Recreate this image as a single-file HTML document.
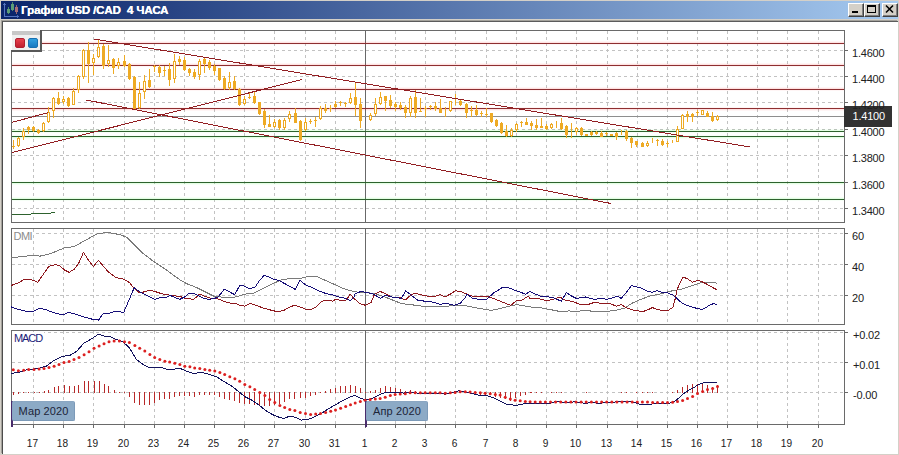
<!DOCTYPE html>
<html lang="ru"><head><meta charset="utf-8"><title>График USD/CAD</title>
<style>
html,body{margin:0;padding:0;background:#d4d0c8;}
body{width:899px;height:455px;position:relative;overflow:hidden;font-family:"Liberation Sans",sans-serif;}
#win{position:absolute;left:0;top:0;width:899px;height:455px;background:#d4d0c8;}
#title{position:absolute;left:1px;top:1px;width:897px;height:18px;background:linear-gradient(90deg,#0a246a 0%,#a6caf0 100%);}
#title .t{position:absolute;left:20px;top:1px;letter-spacing:-0.1px;color:#fff;font-weight:bold;font-size:11.5px;line-height:16px;white-space:pre;text-shadow:0.3px 0 0 #fff;}
.btn{position:absolute;top:2px;width:16px;height:14px;background:#d4d0c8;border:1px solid;border-color:#fff #404040 #404040 #fff;box-sizing:border-box;box-shadow:inset -1px -1px 0 #808080;}
#client{position:absolute;left:2px;top:21px;width:896px;height:433px;background:#fff;border-top:1px solid #5c5c5c;border-left:1px solid #4c4c4c;box-sizing:border-box;box-shadow:-1px -1px 0 #a4a29c;}
.lb{position:absolute;font-size:11px;line-height:12px;color:#202020;white-space:nowrap;letter-spacing:-0.2px;}
.tg{background:#fff;padding-left:2px;box-sizing:border-box;height:12px;}
.dx{width:31px;text-align:center;letter-spacing:0;transform:scaleX(.92);}
.pl{position:absolute;font-size:11px;line-height:12px;letter-spacing:-0.2px;}
.mon{position:absolute;height:20px;background:#8caac6;border:1px solid #8aa6c2;border-right-color:#7c9ab8;border-bottom-color:#7c9ab8;border-radius:2px;letter-spacing:0.12px;box-sizing:border-box;font-size:11px;line-height:18px;color:#1c2438;text-align:center;}
.mk{position:absolute;width:2px;background:#4a2c6c;}
</style></head><body>
<div id="win">
<div id="title">
<svg width="18" height="16" viewBox="0 0 18 16" style="position:absolute;left:2px;top:1px" shape-rendering="crispEdges">
<path d="M1.5 0.5v14H15.5" fill="none" stroke="#5474c0" stroke-width="1"/>
<rect x="0" y="2" width="1" height="1" fill="#4a68b4"/><rect x="2" y="2" width="1" height="1" fill="#4a68b4"/>
<rect x="14" y="13" width="1" height="1" fill="#4a68b4"/><rect x="14" y="15" width="1" height="1" fill="#4a68b4"/>
<rect x="5" y="5" width="1" height="7" fill="#4e8c68"/><rect x="4" y="7" width="3" height="4" fill="#5c9c78"/>
<rect x="9" y="0" width="1" height="9" fill="#4e8c68"/><rect x="8" y="2" width="3" height="6" fill="#5c9c78"/>
<rect x="13" y="3" width="1" height="9" fill="#9c6470"/><rect x="12" y="5" width="3" height="5" fill="#a87078"/>
</svg>
<div class="t">График USD /CAD  4 ЧАСА</div>
<div class="btn" style="left:847px"><svg width="13" height="11" style="position:absolute;left:0;top:0" shape-rendering="crispEdges"><rect x="3" y="7" width="6" height="2" fill="#000"/></svg></div>
<div class="btn" style="left:863px"><svg width="13" height="11" style="position:absolute;left:0;top:0" shape-rendering="crispEdges"><rect x="2.5" y="1.5" width="8" height="7" fill="none" stroke="#000"/><rect x="2" y="1" width="9" height="2" fill="#000"/></svg></div>
<div class="btn" style="left:881px"><svg width="13" height="11" style="position:absolute;left:0;top:0"><path d="M3 1.5l7 7M10 1.5l-7 7" stroke="#000" stroke-width="1.6" fill="none"/></svg></div>
</div>
<div id="client"></div>
<svg width="899" height="455" viewBox="0 0 899 455" style="position:absolute;left:0;top:0">
<g shape-rendering="crispEdges">
<line x1="33.5" y1="31" x2="33.5" y2="222" stroke="#c2c2c2" stroke-width="1" stroke-dasharray="3 3"/>
<line x1="63.5" y1="31" x2="63.5" y2="222" stroke="#c2c2c2" stroke-width="1" stroke-dasharray="3 3"/>
<line x1="93.5" y1="31" x2="93.5" y2="222" stroke="#c2c2c2" stroke-width="1" stroke-dasharray="3 3"/>
<line x1="124.5" y1="31" x2="124.5" y2="222" stroke="#c2c2c2" stroke-width="1" stroke-dasharray="3 3"/>
<line x1="154.5" y1="31" x2="154.5" y2="222" stroke="#c2c2c2" stroke-width="1" stroke-dasharray="3 3"/>
<line x1="184.5" y1="31" x2="184.5" y2="222" stroke="#c2c2c2" stroke-width="1" stroke-dasharray="3 3"/>
<line x1="214.5" y1="31" x2="214.5" y2="222" stroke="#c2c2c2" stroke-width="1" stroke-dasharray="3 3"/>
<line x1="244.5" y1="31" x2="244.5" y2="222" stroke="#c2c2c2" stroke-width="1" stroke-dasharray="3 3"/>
<line x1="274.5" y1="31" x2="274.5" y2="222" stroke="#c2c2c2" stroke-width="1" stroke-dasharray="3 3"/>
<line x1="305.5" y1="31" x2="305.5" y2="222" stroke="#c2c2c2" stroke-width="1" stroke-dasharray="3 3"/>
<line x1="335.5" y1="31" x2="335.5" y2="222" stroke="#c2c2c2" stroke-width="1" stroke-dasharray="3 3"/>
<line x1="365.5" y1="31" x2="365.5" y2="222" stroke="#c2c2c2" stroke-width="1" stroke-dasharray="3 3"/>
<line x1="395.5" y1="31" x2="395.5" y2="222" stroke="#c2c2c2" stroke-width="1" stroke-dasharray="3 3"/>
<line x1="425.5" y1="31" x2="425.5" y2="222" stroke="#c2c2c2" stroke-width="1" stroke-dasharray="3 3"/>
<line x1="455.5" y1="31" x2="455.5" y2="222" stroke="#c2c2c2" stroke-width="1" stroke-dasharray="3 3"/>
<line x1="486.5" y1="31" x2="486.5" y2="222" stroke="#c2c2c2" stroke-width="1" stroke-dasharray="3 3"/>
<line x1="516.5" y1="31" x2="516.5" y2="222" stroke="#c2c2c2" stroke-width="1" stroke-dasharray="3 3"/>
<line x1="546.5" y1="31" x2="546.5" y2="222" stroke="#c2c2c2" stroke-width="1" stroke-dasharray="3 3"/>
<line x1="576.5" y1="31" x2="576.5" y2="222" stroke="#c2c2c2" stroke-width="1" stroke-dasharray="3 3"/>
<line x1="607.5" y1="31" x2="607.5" y2="222" stroke="#c2c2c2" stroke-width="1" stroke-dasharray="3 3"/>
<line x1="637.5" y1="31" x2="637.5" y2="222" stroke="#c2c2c2" stroke-width="1" stroke-dasharray="3 3"/>
<line x1="667.5" y1="31" x2="667.5" y2="222" stroke="#c2c2c2" stroke-width="1" stroke-dasharray="3 3"/>
<line x1="697.5" y1="31" x2="697.5" y2="222" stroke="#c2c2c2" stroke-width="1" stroke-dasharray="3 3"/>
<line x1="727.5" y1="31" x2="727.5" y2="222" stroke="#c2c2c2" stroke-width="1" stroke-dasharray="3 3"/>
<line x1="757.5" y1="31" x2="757.5" y2="222" stroke="#c2c2c2" stroke-width="1" stroke-dasharray="3 3"/>
<line x1="787.5" y1="31" x2="787.5" y2="222" stroke="#c2c2c2" stroke-width="1" stroke-dasharray="3 3"/>
<line x1="818.5" y1="31" x2="818.5" y2="222" stroke="#c2c2c2" stroke-width="1" stroke-dasharray="3 3"/>
<line x1="12" y1="50.5" x2="844" y2="50.5" stroke="#c2c2c2" stroke-width="1" stroke-dasharray="3 3"/>
<line x1="12" y1="76.5" x2="844" y2="76.5" stroke="#c2c2c2" stroke-width="1" stroke-dasharray="3 3"/>
<line x1="12" y1="102.5" x2="844" y2="102.5" stroke="#c2c2c2" stroke-width="1" stroke-dasharray="3 3"/>
<line x1="12" y1="129.5" x2="844" y2="129.5" stroke="#c2c2c2" stroke-width="1" stroke-dasharray="3 3"/>
<line x1="12" y1="155.5" x2="844" y2="155.5" stroke="#c2c2c2" stroke-width="1" stroke-dasharray="3 3"/>
<line x1="12" y1="182.5" x2="844" y2="182.5" stroke="#c2c2c2" stroke-width="1" stroke-dasharray="3 3"/>
<line x1="12" y1="208.5" x2="844" y2="208.5" stroke="#c2c2c2" stroke-width="1" stroke-dasharray="3 3"/>
<line x1="33.5" y1="229" x2="33.5" y2="324" stroke="#c2c2c2" stroke-width="1" stroke-dasharray="3 3"/>
<line x1="63.5" y1="229" x2="63.5" y2="324" stroke="#c2c2c2" stroke-width="1" stroke-dasharray="3 3"/>
<line x1="93.5" y1="229" x2="93.5" y2="324" stroke="#c2c2c2" stroke-width="1" stroke-dasharray="3 3"/>
<line x1="124.5" y1="229" x2="124.5" y2="324" stroke="#c2c2c2" stroke-width="1" stroke-dasharray="3 3"/>
<line x1="154.5" y1="229" x2="154.5" y2="324" stroke="#c2c2c2" stroke-width="1" stroke-dasharray="3 3"/>
<line x1="184.5" y1="229" x2="184.5" y2="324" stroke="#c2c2c2" stroke-width="1" stroke-dasharray="3 3"/>
<line x1="214.5" y1="229" x2="214.5" y2="324" stroke="#c2c2c2" stroke-width="1" stroke-dasharray="3 3"/>
<line x1="244.5" y1="229" x2="244.5" y2="324" stroke="#c2c2c2" stroke-width="1" stroke-dasharray="3 3"/>
<line x1="274.5" y1="229" x2="274.5" y2="324" stroke="#c2c2c2" stroke-width="1" stroke-dasharray="3 3"/>
<line x1="305.5" y1="229" x2="305.5" y2="324" stroke="#c2c2c2" stroke-width="1" stroke-dasharray="3 3"/>
<line x1="335.5" y1="229" x2="335.5" y2="324" stroke="#c2c2c2" stroke-width="1" stroke-dasharray="3 3"/>
<line x1="365.5" y1="229" x2="365.5" y2="324" stroke="#c2c2c2" stroke-width="1" stroke-dasharray="3 3"/>
<line x1="395.5" y1="229" x2="395.5" y2="324" stroke="#c2c2c2" stroke-width="1" stroke-dasharray="3 3"/>
<line x1="425.5" y1="229" x2="425.5" y2="324" stroke="#c2c2c2" stroke-width="1" stroke-dasharray="3 3"/>
<line x1="455.5" y1="229" x2="455.5" y2="324" stroke="#c2c2c2" stroke-width="1" stroke-dasharray="3 3"/>
<line x1="486.5" y1="229" x2="486.5" y2="324" stroke="#c2c2c2" stroke-width="1" stroke-dasharray="3 3"/>
<line x1="516.5" y1="229" x2="516.5" y2="324" stroke="#c2c2c2" stroke-width="1" stroke-dasharray="3 3"/>
<line x1="546.5" y1="229" x2="546.5" y2="324" stroke="#c2c2c2" stroke-width="1" stroke-dasharray="3 3"/>
<line x1="576.5" y1="229" x2="576.5" y2="324" stroke="#c2c2c2" stroke-width="1" stroke-dasharray="3 3"/>
<line x1="607.5" y1="229" x2="607.5" y2="324" stroke="#c2c2c2" stroke-width="1" stroke-dasharray="3 3"/>
<line x1="637.5" y1="229" x2="637.5" y2="324" stroke="#c2c2c2" stroke-width="1" stroke-dasharray="3 3"/>
<line x1="667.5" y1="229" x2="667.5" y2="324" stroke="#c2c2c2" stroke-width="1" stroke-dasharray="3 3"/>
<line x1="697.5" y1="229" x2="697.5" y2="324" stroke="#c2c2c2" stroke-width="1" stroke-dasharray="3 3"/>
<line x1="727.5" y1="229" x2="727.5" y2="324" stroke="#c2c2c2" stroke-width="1" stroke-dasharray="3 3"/>
<line x1="757.5" y1="229" x2="757.5" y2="324" stroke="#c2c2c2" stroke-width="1" stroke-dasharray="3 3"/>
<line x1="787.5" y1="229" x2="787.5" y2="324" stroke="#c2c2c2" stroke-width="1" stroke-dasharray="3 3"/>
<line x1="818.5" y1="229" x2="818.5" y2="324" stroke="#c2c2c2" stroke-width="1" stroke-dasharray="3 3"/>
<line x1="12" y1="233.5" x2="844" y2="233.5" stroke="#c2c2c2" stroke-width="1" stroke-dasharray="3 3"/>
<line x1="12" y1="264.5" x2="844" y2="264.5" stroke="#c2c2c2" stroke-width="1" stroke-dasharray="3 3"/>
<line x1="12" y1="295.5" x2="844" y2="295.5" stroke="#c2c2c2" stroke-width="1" stroke-dasharray="3 3"/>
<line x1="33.5" y1="331" x2="33.5" y2="424" stroke="#c2c2c2" stroke-width="1" stroke-dasharray="3 3"/>
<line x1="63.5" y1="331" x2="63.5" y2="424" stroke="#c2c2c2" stroke-width="1" stroke-dasharray="3 3"/>
<line x1="93.5" y1="331" x2="93.5" y2="424" stroke="#c2c2c2" stroke-width="1" stroke-dasharray="3 3"/>
<line x1="124.5" y1="331" x2="124.5" y2="424" stroke="#c2c2c2" stroke-width="1" stroke-dasharray="3 3"/>
<line x1="154.5" y1="331" x2="154.5" y2="424" stroke="#c2c2c2" stroke-width="1" stroke-dasharray="3 3"/>
<line x1="184.5" y1="331" x2="184.5" y2="424" stroke="#c2c2c2" stroke-width="1" stroke-dasharray="3 3"/>
<line x1="214.5" y1="331" x2="214.5" y2="424" stroke="#c2c2c2" stroke-width="1" stroke-dasharray="3 3"/>
<line x1="244.5" y1="331" x2="244.5" y2="424" stroke="#c2c2c2" stroke-width="1" stroke-dasharray="3 3"/>
<line x1="274.5" y1="331" x2="274.5" y2="424" stroke="#c2c2c2" stroke-width="1" stroke-dasharray="3 3"/>
<line x1="305.5" y1="331" x2="305.5" y2="424" stroke="#c2c2c2" stroke-width="1" stroke-dasharray="3 3"/>
<line x1="335.5" y1="331" x2="335.5" y2="424" stroke="#c2c2c2" stroke-width="1" stroke-dasharray="3 3"/>
<line x1="365.5" y1="331" x2="365.5" y2="424" stroke="#c2c2c2" stroke-width="1" stroke-dasharray="3 3"/>
<line x1="395.5" y1="331" x2="395.5" y2="424" stroke="#c2c2c2" stroke-width="1" stroke-dasharray="3 3"/>
<line x1="425.5" y1="331" x2="425.5" y2="424" stroke="#c2c2c2" stroke-width="1" stroke-dasharray="3 3"/>
<line x1="455.5" y1="331" x2="455.5" y2="424" stroke="#c2c2c2" stroke-width="1" stroke-dasharray="3 3"/>
<line x1="486.5" y1="331" x2="486.5" y2="424" stroke="#c2c2c2" stroke-width="1" stroke-dasharray="3 3"/>
<line x1="516.5" y1="331" x2="516.5" y2="424" stroke="#c2c2c2" stroke-width="1" stroke-dasharray="3 3"/>
<line x1="546.5" y1="331" x2="546.5" y2="424" stroke="#c2c2c2" stroke-width="1" stroke-dasharray="3 3"/>
<line x1="576.5" y1="331" x2="576.5" y2="424" stroke="#c2c2c2" stroke-width="1" stroke-dasharray="3 3"/>
<line x1="607.5" y1="331" x2="607.5" y2="424" stroke="#c2c2c2" stroke-width="1" stroke-dasharray="3 3"/>
<line x1="637.5" y1="331" x2="637.5" y2="424" stroke="#c2c2c2" stroke-width="1" stroke-dasharray="3 3"/>
<line x1="667.5" y1="331" x2="667.5" y2="424" stroke="#c2c2c2" stroke-width="1" stroke-dasharray="3 3"/>
<line x1="697.5" y1="331" x2="697.5" y2="424" stroke="#c2c2c2" stroke-width="1" stroke-dasharray="3 3"/>
<line x1="727.5" y1="331" x2="727.5" y2="424" stroke="#c2c2c2" stroke-width="1" stroke-dasharray="3 3"/>
<line x1="757.5" y1="331" x2="757.5" y2="424" stroke="#c2c2c2" stroke-width="1" stroke-dasharray="3 3"/>
<line x1="787.5" y1="331" x2="787.5" y2="424" stroke="#c2c2c2" stroke-width="1" stroke-dasharray="3 3"/>
<line x1="818.5" y1="331" x2="818.5" y2="424" stroke="#c2c2c2" stroke-width="1" stroke-dasharray="3 3"/>
<line x1="12" y1="332.5" x2="844" y2="332.5" stroke="#c2c2c2" stroke-width="1" stroke-dasharray="3 3"/>
<line x1="12" y1="362.5" x2="844" y2="362.5" stroke="#c2c2c2" stroke-width="1" stroke-dasharray="3 3"/>
<line x1="12" y1="392.5" x2="844" y2="392.5" stroke="#c2c2c2" stroke-width="1" stroke-dasharray="3 3"/>
<rect x="11.5" y="30.5" width="833" height="192" fill="none" stroke="#6a6a6a" stroke-width="1"/>
<rect x="11.5" y="228.5" width="833" height="96" fill="none" stroke="#6a6a6a" stroke-width="1"/>
<rect x="11.5" y="330.5" width="833" height="94" fill="none" stroke="#6a6a6a" stroke-width="1"/>
<line x1="845" y1="50.5" x2="848" y2="50.5" stroke="#6a6a6a" stroke-width="1"/>
<line x1="845" y1="76.5" x2="848" y2="76.5" stroke="#6a6a6a" stroke-width="1"/>
<line x1="845" y1="102.5" x2="848" y2="102.5" stroke="#6a6a6a" stroke-width="1"/>
<line x1="845" y1="129.5" x2="848" y2="129.5" stroke="#6a6a6a" stroke-width="1"/>
<line x1="845" y1="155.5" x2="848" y2="155.5" stroke="#6a6a6a" stroke-width="1"/>
<line x1="845" y1="182.5" x2="848" y2="182.5" stroke="#6a6a6a" stroke-width="1"/>
<line x1="845" y1="208.5" x2="848" y2="208.5" stroke="#6a6a6a" stroke-width="1"/>
<line x1="845" y1="233.5" x2="848" y2="233.5" stroke="#6a6a6a" stroke-width="1"/>
<line x1="845" y1="264.5" x2="848" y2="264.5" stroke="#6a6a6a" stroke-width="1"/>
<line x1="845" y1="295.5" x2="848" y2="295.5" stroke="#6a6a6a" stroke-width="1"/>
<line x1="845" y1="332.5" x2="848" y2="332.5" stroke="#6a6a6a" stroke-width="1"/>
<line x1="845" y1="362.5" x2="848" y2="362.5" stroke="#6a6a6a" stroke-width="1"/>
<line x1="845" y1="392.5" x2="848" y2="392.5" stroke="#6a6a6a" stroke-width="1"/>
<line x1="33.5" y1="425" x2="33.5" y2="428" stroke="#6a6a6a" stroke-width="1"/>
<line x1="63.5" y1="425" x2="63.5" y2="428" stroke="#6a6a6a" stroke-width="1"/>
<line x1="93.5" y1="425" x2="93.5" y2="428" stroke="#6a6a6a" stroke-width="1"/>
<line x1="124.5" y1="425" x2="124.5" y2="428" stroke="#6a6a6a" stroke-width="1"/>
<line x1="154.5" y1="425" x2="154.5" y2="428" stroke="#6a6a6a" stroke-width="1"/>
<line x1="184.5" y1="425" x2="184.5" y2="428" stroke="#6a6a6a" stroke-width="1"/>
<line x1="214.5" y1="425" x2="214.5" y2="428" stroke="#6a6a6a" stroke-width="1"/>
<line x1="244.5" y1="425" x2="244.5" y2="428" stroke="#6a6a6a" stroke-width="1"/>
<line x1="274.5" y1="425" x2="274.5" y2="428" stroke="#6a6a6a" stroke-width="1"/>
<line x1="305.5" y1="425" x2="305.5" y2="428" stroke="#6a6a6a" stroke-width="1"/>
<line x1="335.5" y1="425" x2="335.5" y2="428" stroke="#6a6a6a" stroke-width="1"/>
<line x1="365.5" y1="425" x2="365.5" y2="428" stroke="#6a6a6a" stroke-width="1"/>
<line x1="395.5" y1="425" x2="395.5" y2="428" stroke="#6a6a6a" stroke-width="1"/>
<line x1="425.5" y1="425" x2="425.5" y2="428" stroke="#6a6a6a" stroke-width="1"/>
<line x1="455.5" y1="425" x2="455.5" y2="428" stroke="#6a6a6a" stroke-width="1"/>
<line x1="486.5" y1="425" x2="486.5" y2="428" stroke="#6a6a6a" stroke-width="1"/>
<line x1="516.5" y1="425" x2="516.5" y2="428" stroke="#6a6a6a" stroke-width="1"/>
<line x1="546.5" y1="425" x2="546.5" y2="428" stroke="#6a6a6a" stroke-width="1"/>
<line x1="576.5" y1="425" x2="576.5" y2="428" stroke="#6a6a6a" stroke-width="1"/>
<line x1="607.5" y1="425" x2="607.5" y2="428" stroke="#6a6a6a" stroke-width="1"/>
<line x1="637.5" y1="425" x2="637.5" y2="428" stroke="#6a6a6a" stroke-width="1"/>
<line x1="667.5" y1="425" x2="667.5" y2="428" stroke="#6a6a6a" stroke-width="1"/>
<line x1="697.5" y1="425" x2="697.5" y2="428" stroke="#6a6a6a" stroke-width="1"/>
<line x1="727.5" y1="425" x2="727.5" y2="428" stroke="#6a6a6a" stroke-width="1"/>
<line x1="757.5" y1="425" x2="757.5" y2="428" stroke="#6a6a6a" stroke-width="1"/>
<line x1="787.5" y1="425" x2="787.5" y2="428" stroke="#6a6a6a" stroke-width="1"/>
<line x1="818.5" y1="425" x2="818.5" y2="428" stroke="#6a6a6a" stroke-width="1"/>
<line x1="365.5" y1="31" x2="365.5" y2="222" stroke="#686868" stroke-width="1"/>
<line x1="365.5" y1="229" x2="365.5" y2="324" stroke="#686868" stroke-width="1"/>
<line x1="365.5" y1="331" x2="365.5" y2="424" stroke="#686868" stroke-width="1"/>
<line x1="12" y1="42.5" x2="844" y2="42.5" stroke="#ff0000" stroke-opacity="0.115"/>
<line x1="12" y1="41.5" x2="844" y2="41.5" stroke="#ff0000" stroke-opacity="0.04"/>
<line x1="12" y1="44.5" x2="844" y2="44.5" stroke="#ff0000" stroke-opacity="0.04"/>
<line x1="12" y1="43.5" x2="844" y2="43.5" stroke="#8e2f31" stroke-width="1"/>
<line x1="12" y1="64.5" x2="844" y2="64.5" stroke="#ff0000" stroke-opacity="0.115"/>
<line x1="12" y1="63.5" x2="844" y2="63.5" stroke="#ff0000" stroke-opacity="0.04"/>
<line x1="12" y1="66.5" x2="844" y2="66.5" stroke="#ff0000" stroke-opacity="0.04"/>
<line x1="12" y1="65.5" x2="844" y2="65.5" stroke="#8e2f31" stroke-width="1"/>
<line x1="12" y1="88.5" x2="844" y2="88.5" stroke="#ff0000" stroke-opacity="0.115"/>
<line x1="12" y1="87.5" x2="844" y2="87.5" stroke="#ff0000" stroke-opacity="0.04"/>
<line x1="12" y1="90.5" x2="844" y2="90.5" stroke="#ff0000" stroke-opacity="0.04"/>
<line x1="12" y1="89.5" x2="844" y2="89.5" stroke="#8e2f31" stroke-width="1"/>
<line x1="12" y1="109.5" x2="844" y2="109.5" stroke="#ff0000" stroke-opacity="0.115"/>
<line x1="12" y1="110.5" x2="844" y2="110.5" stroke="#ff0000" stroke-opacity="0.04"/>
<line x1="12" y1="107.5" x2="844" y2="107.5" stroke="#ff0000" stroke-opacity="0.04"/>
<line x1="12" y1="108.5" x2="844" y2="108.5" stroke="#8e2f31" stroke-width="1"/>
<line x1="12" y1="116.5" x2="844" y2="116.5" stroke="#8e8e8e" stroke-width="1"/>
<line x1="12" y1="130.5" x2="844" y2="130.5" stroke="#00ff00" stroke-opacity="0.11"/>
<line x1="12" y1="129.5" x2="844" y2="129.5" stroke="#00ff00" stroke-opacity="0.035"/>
<line x1="12" y1="132.5" x2="844" y2="132.5" stroke="#00ff00" stroke-opacity="0.035"/>
<line x1="12" y1="131.5" x2="844" y2="131.5" stroke="#2e622e" stroke-width="1"/>
<line x1="12" y1="137.5" x2="844" y2="137.5" stroke="#00ff00" stroke-opacity="0.11"/>
<line x1="12" y1="138.5" x2="844" y2="138.5" stroke="#00ff00" stroke-opacity="0.035"/>
<line x1="12" y1="135.5" x2="844" y2="135.5" stroke="#00ff00" stroke-opacity="0.035"/>
<line x1="12" y1="136.5" x2="844" y2="136.5" stroke="#2e622e" stroke-width="1"/>
<line x1="12" y1="183.5" x2="844" y2="183.5" stroke="#00ff00" stroke-opacity="0.11"/>
<line x1="12" y1="184.5" x2="844" y2="184.5" stroke="#00ff00" stroke-opacity="0.035"/>
<line x1="12" y1="181.5" x2="844" y2="181.5" stroke="#00ff00" stroke-opacity="0.035"/>
<line x1="12" y1="182.5" x2="844" y2="182.5" stroke="#2e622e" stroke-width="1"/>
<line x1="12" y1="198.5" x2="844" y2="198.5" stroke="#00ff00" stroke-opacity="0.11"/>
<line x1="12" y1="197.5" x2="844" y2="197.5" stroke="#00ff00" stroke-opacity="0.035"/>
<line x1="12" y1="200.5" x2="844" y2="200.5" stroke="#00ff00" stroke-opacity="0.035"/>
<line x1="12" y1="199.5" x2="844" y2="199.5" stroke="#2e622e" stroke-width="1"/>
<rect x="13" y="140" width="1" height="9" fill="#eeaa24"/>
<rect x="12" y="146" width="3" height="1" fill="#eeaa24"/>
<rect x="18" y="137" width="1" height="10" fill="#eeaa24"/>
<rect x="17" y="138" width="3" height="8" fill="#eeaa24"/>
<rect x="18" y="139" width="1" height="6" fill="#fff"/>
<rect x="23" y="128" width="1" height="12" fill="#eeaa24"/>
<rect x="22" y="131" width="3" height="6" fill="#eeaa24"/>
<rect x="23" y="132" width="1" height="4" fill="#fff"/>
<rect x="28" y="126" width="1" height="8" fill="#eeaa24"/>
<rect x="27" y="127" width="3" height="3" fill="#eeaa24"/>
<rect x="33" y="126" width="1" height="6" fill="#eeaa24"/>
<rect x="32" y="127" width="3" height="4" fill="#eeaa24"/>
<rect x="38" y="129" width="1" height="5" fill="#eeaa24"/>
<rect x="37" y="130" width="3" height="3" fill="#eeaa24"/>
<rect x="43" y="122" width="1" height="10" fill="#eeaa24"/>
<rect x="42" y="123" width="3" height="8" fill="#eeaa24"/>
<rect x="43" y="124" width="1" height="6" fill="#fff"/>
<rect x="48" y="107" width="1" height="16" fill="#eeaa24"/>
<rect x="47" y="112" width="3" height="10" fill="#eeaa24"/>
<rect x="48" y="113" width="1" height="8" fill="#fff"/>
<rect x="53" y="97" width="1" height="21" fill="#eeaa24"/>
<rect x="52" y="98" width="3" height="13" fill="#eeaa24"/>
<rect x="53" y="99" width="1" height="11" fill="#fff"/>
<rect x="58" y="92" width="1" height="13" fill="#eeaa24"/>
<rect x="57" y="98" width="3" height="6" fill="#eeaa24"/>
<rect x="63" y="96" width="1" height="8" fill="#eeaa24"/>
<rect x="62" y="99" width="3" height="3" fill="#eeaa24"/>
<rect x="63" y="100" width="1" height="1" fill="#fff"/>
<rect x="68" y="97" width="1" height="10" fill="#eeaa24"/>
<rect x="67" y="98" width="3" height="8" fill="#eeaa24"/>
<rect x="73" y="88" width="1" height="17" fill="#eeaa24"/>
<rect x="72" y="91" width="3" height="14" fill="#eeaa24"/>
<rect x="73" y="92" width="1" height="12" fill="#fff"/>
<rect x="78" y="75" width="1" height="18" fill="#eeaa24"/>
<rect x="77" y="76" width="3" height="14" fill="#eeaa24"/>
<rect x="78" y="77" width="1" height="12" fill="#fff"/>
<rect x="83" y="49" width="1" height="30" fill="#eeaa24"/>
<rect x="82" y="50" width="3" height="27" fill="#eeaa24"/>
<rect x="83" y="51" width="1" height="25" fill="#fff"/>
<rect x="88" y="42" width="1" height="41" fill="#eeaa24"/>
<rect x="87" y="50" width="3" height="14" fill="#eeaa24"/>
<rect x="93" y="54" width="1" height="21" fill="#eeaa24"/>
<rect x="92" y="58" width="3" height="5" fill="#eeaa24"/>
<rect x="93" y="59" width="1" height="3" fill="#fff"/>
<rect x="98" y="39" width="1" height="19" fill="#eeaa24"/>
<rect x="97" y="47" width="3" height="10" fill="#eeaa24"/>
<rect x="98" y="48" width="1" height="8" fill="#fff"/>
<rect x="103" y="44" width="1" height="25" fill="#eeaa24"/>
<rect x="102" y="46" width="3" height="20" fill="#eeaa24"/>
<rect x="108" y="45" width="1" height="22" fill="#eeaa24"/>
<rect x="107" y="60" width="3" height="4" fill="#eeaa24"/>
<rect x="108" y="61" width="1" height="2" fill="#fff"/>
<rect x="113" y="58" width="1" height="16" fill="#eeaa24"/>
<rect x="112" y="59" width="3" height="9" fill="#eeaa24"/>
<rect x="118" y="58" width="1" height="11" fill="#eeaa24"/>
<rect x="117" y="62" width="3" height="4" fill="#eeaa24"/>
<rect x="118" y="63" width="1" height="2" fill="#fff"/>
<rect x="124" y="55" width="1" height="12" fill="#eeaa24"/>
<rect x="123" y="61" width="3" height="5" fill="#eeaa24"/>
<rect x="129" y="63" width="1" height="17" fill="#eeaa24"/>
<rect x="128" y="64" width="3" height="15" fill="#eeaa24"/>
<rect x="134" y="76" width="1" height="33" fill="#eeaa24"/>
<rect x="133" y="77" width="3" height="32" fill="#eeaa24"/>
<rect x="139" y="82" width="1" height="27" fill="#eeaa24"/>
<rect x="138" y="93" width="3" height="15" fill="#eeaa24"/>
<rect x="139" y="94" width="1" height="13" fill="#fff"/>
<rect x="144" y="75" width="1" height="24" fill="#eeaa24"/>
<rect x="143" y="81" width="3" height="11" fill="#eeaa24"/>
<rect x="144" y="82" width="1" height="9" fill="#fff"/>
<rect x="149" y="69" width="1" height="19" fill="#eeaa24"/>
<rect x="148" y="80" width="3" height="7" fill="#eeaa24"/>
<rect x="154" y="65" width="1" height="7" fill="#eeaa24"/>
<rect x="153" y="66" width="3" height="1" fill="#eeaa24"/>
<rect x="159" y="65" width="1" height="12" fill="#eeaa24"/>
<rect x="158" y="67" width="3" height="6" fill="#eeaa24"/>
<rect x="164" y="66" width="1" height="10" fill="#eeaa24"/>
<rect x="163" y="70" width="3" height="1" fill="#eeaa24"/>
<rect x="169" y="63" width="1" height="23" fill="#eeaa24"/>
<rect x="168" y="69" width="3" height="11" fill="#eeaa24"/>
<rect x="174" y="54" width="1" height="29" fill="#eeaa24"/>
<rect x="173" y="61" width="3" height="18" fill="#eeaa24"/>
<rect x="174" y="62" width="1" height="16" fill="#fff"/>
<rect x="179" y="56" width="1" height="9" fill="#eeaa24"/>
<rect x="178" y="59" width="3" height="3" fill="#eeaa24"/>
<rect x="184" y="57" width="1" height="14" fill="#eeaa24"/>
<rect x="183" y="60" width="3" height="10" fill="#eeaa24"/>
<rect x="189" y="68" width="1" height="8" fill="#eeaa24"/>
<rect x="188" y="69" width="3" height="4" fill="#eeaa24"/>
<rect x="194" y="69" width="1" height="10" fill="#eeaa24"/>
<rect x="193" y="72" width="3" height="5" fill="#eeaa24"/>
<rect x="199" y="59" width="1" height="21" fill="#eeaa24"/>
<rect x="198" y="61" width="3" height="14" fill="#eeaa24"/>
<rect x="199" y="62" width="1" height="12" fill="#fff"/>
<rect x="204" y="57" width="1" height="16" fill="#eeaa24"/>
<rect x="203" y="59" width="3" height="5" fill="#eeaa24"/>
<rect x="209" y="60" width="1" height="10" fill="#eeaa24"/>
<rect x="208" y="62" width="3" height="6" fill="#eeaa24"/>
<rect x="214" y="64" width="1" height="11" fill="#eeaa24"/>
<rect x="213" y="66" width="3" height="5" fill="#eeaa24"/>
<rect x="219" y="68" width="1" height="13" fill="#eeaa24"/>
<rect x="218" y="68" width="3" height="12" fill="#eeaa24"/>
<rect x="224" y="76" width="1" height="14" fill="#eeaa24"/>
<rect x="223" y="78" width="3" height="11" fill="#eeaa24"/>
<rect x="229" y="72" width="1" height="18" fill="#eeaa24"/>
<rect x="228" y="82" width="3" height="6" fill="#eeaa24"/>
<rect x="229" y="83" width="1" height="4" fill="#fff"/>
<rect x="234" y="76" width="1" height="14" fill="#eeaa24"/>
<rect x="233" y="81" width="3" height="8" fill="#eeaa24"/>
<rect x="239" y="88" width="1" height="18" fill="#eeaa24"/>
<rect x="238" y="89" width="3" height="16" fill="#eeaa24"/>
<rect x="244" y="96" width="1" height="9" fill="#eeaa24"/>
<rect x="243" y="99" width="3" height="5" fill="#eeaa24"/>
<rect x="244" y="100" width="1" height="3" fill="#fff"/>
<rect x="249" y="93" width="1" height="6" fill="#eeaa24"/>
<rect x="248" y="97" width="3" height="1" fill="#eeaa24"/>
<rect x="254" y="92" width="1" height="12" fill="#eeaa24"/>
<rect x="253" y="96" width="3" height="7" fill="#eeaa24"/>
<rect x="259" y="102" width="1" height="13" fill="#eeaa24"/>
<rect x="258" y="102" width="3" height="12" fill="#eeaa24"/>
<rect x="264" y="109" width="1" height="19" fill="#eeaa24"/>
<rect x="263" y="111" width="3" height="14" fill="#eeaa24"/>
<rect x="269" y="115" width="1" height="12" fill="#eeaa24"/>
<rect x="268" y="124" width="3" height="3" fill="#eeaa24"/>
<rect x="274" y="119" width="1" height="9" fill="#eeaa24"/>
<rect x="273" y="122" width="3" height="5" fill="#eeaa24"/>
<rect x="274" y="123" width="1" height="3" fill="#fff"/>
<rect x="279" y="119" width="1" height="11" fill="#eeaa24"/>
<rect x="278" y="120" width="3" height="8" fill="#eeaa24"/>
<rect x="284" y="118" width="1" height="12" fill="#eeaa24"/>
<rect x="283" y="120" width="3" height="8" fill="#eeaa24"/>
<rect x="284" y="121" width="1" height="6" fill="#fff"/>
<rect x="289" y="111" width="1" height="11" fill="#eeaa24"/>
<rect x="288" y="114" width="3" height="5" fill="#eeaa24"/>
<rect x="289" y="115" width="1" height="3" fill="#fff"/>
<rect x="295" y="108" width="1" height="15" fill="#eeaa24"/>
<rect x="294" y="113" width="3" height="10" fill="#eeaa24"/>
<rect x="300" y="120" width="1" height="21" fill="#eeaa24"/>
<rect x="299" y="121" width="3" height="19" fill="#eeaa24"/>
<rect x="305" y="118" width="1" height="13" fill="#eeaa24"/>
<rect x="304" y="122" width="3" height="8" fill="#eeaa24"/>
<rect x="305" y="123" width="1" height="6" fill="#fff"/>
<rect x="310" y="119" width="1" height="5" fill="#eeaa24"/>
<rect x="309" y="121" width="3" height="1" fill="#eeaa24"/>
<rect x="315" y="117" width="1" height="10" fill="#eeaa24"/>
<rect x="314" y="120" width="3" height="1" fill="#eeaa24"/>
<rect x="320" y="106" width="1" height="14" fill="#eeaa24"/>
<rect x="319" y="108" width="3" height="11" fill="#eeaa24"/>
<rect x="320" y="109" width="1" height="9" fill="#fff"/>
<rect x="325" y="104" width="1" height="9" fill="#eeaa24"/>
<rect x="324" y="108" width="3" height="3" fill="#eeaa24"/>
<rect x="330" y="105" width="1" height="7" fill="#eeaa24"/>
<rect x="329" y="108" width="3" height="1" fill="#eeaa24"/>
<rect x="335" y="101" width="1" height="7" fill="#eeaa24"/>
<rect x="334" y="104" width="3" height="3" fill="#eeaa24"/>
<rect x="340" y="101" width="1" height="5" fill="#eeaa24"/>
<rect x="339" y="102" width="3" height="1" fill="#eeaa24"/>
<rect x="345" y="102" width="1" height="5" fill="#eeaa24"/>
<rect x="344" y="103" width="3" height="1" fill="#eeaa24"/>
<rect x="350" y="93" width="1" height="11" fill="#eeaa24"/>
<rect x="349" y="98" width="3" height="5" fill="#eeaa24"/>
<rect x="350" y="99" width="1" height="3" fill="#fff"/>
<rect x="355" y="82" width="1" height="34" fill="#eeaa24"/>
<rect x="354" y="97" width="3" height="8" fill="#eeaa24"/>
<rect x="360" y="98" width="1" height="30" fill="#eeaa24"/>
<rect x="359" y="104" width="3" height="17" fill="#eeaa24"/>
<rect x="370" y="113" width="1" height="8" fill="#eeaa24"/>
<rect x="369" y="115" width="3" height="5" fill="#eeaa24"/>
<rect x="370" y="116" width="1" height="3" fill="#fff"/>
<rect x="375" y="98" width="1" height="18" fill="#eeaa24"/>
<rect x="374" y="104" width="3" height="10" fill="#eeaa24"/>
<rect x="375" y="105" width="1" height="8" fill="#fff"/>
<rect x="380" y="92" width="1" height="13" fill="#eeaa24"/>
<rect x="379" y="97" width="3" height="7" fill="#eeaa24"/>
<rect x="380" y="98" width="1" height="5" fill="#fff"/>
<rect x="385" y="96" width="1" height="15" fill="#eeaa24"/>
<rect x="384" y="96" width="3" height="5" fill="#eeaa24"/>
<rect x="390" y="95" width="1" height="13" fill="#eeaa24"/>
<rect x="389" y="100" width="3" height="6" fill="#eeaa24"/>
<rect x="395" y="102" width="1" height="9" fill="#eeaa24"/>
<rect x="394" y="104" width="3" height="3" fill="#eeaa24"/>
<rect x="400" y="102" width="1" height="8" fill="#eeaa24"/>
<rect x="399" y="105" width="3" height="3" fill="#eeaa24"/>
<rect x="405" y="105" width="1" height="13" fill="#eeaa24"/>
<rect x="404" y="107" width="3" height="6" fill="#eeaa24"/>
<rect x="410" y="96" width="1" height="21" fill="#eeaa24"/>
<rect x="409" y="98" width="3" height="15" fill="#eeaa24"/>
<rect x="410" y="99" width="1" height="13" fill="#fff"/>
<rect x="415" y="90" width="1" height="28" fill="#eeaa24"/>
<rect x="414" y="97" width="3" height="16" fill="#eeaa24"/>
<rect x="420" y="98" width="1" height="14" fill="#eeaa24"/>
<rect x="419" y="111" width="3" height="1" fill="#eeaa24"/>
<rect x="425" y="106" width="1" height="11" fill="#eeaa24"/>
<rect x="424" y="108" width="3" height="1" fill="#eeaa24"/>
<rect x="430" y="105" width="1" height="5" fill="#eeaa24"/>
<rect x="429" y="106" width="3" height="1" fill="#eeaa24"/>
<rect x="435" y="102" width="1" height="9" fill="#eeaa24"/>
<rect x="434" y="106" width="3" height="3" fill="#eeaa24"/>
<rect x="440" y="99" width="1" height="14" fill="#eeaa24"/>
<rect x="439" y="108" width="3" height="5" fill="#eeaa24"/>
<rect x="445" y="107" width="1" height="10" fill="#eeaa24"/>
<rect x="450" y="101" width="1" height="11" fill="#eeaa24"/>
<rect x="449" y="101" width="3" height="10" fill="#eeaa24"/>
<rect x="450" y="102" width="1" height="8" fill="#fff"/>
<rect x="455" y="94" width="1" height="11" fill="#eeaa24"/>
<rect x="460" y="100" width="1" height="6" fill="#eeaa24"/>
<rect x="459" y="101" width="3" height="4" fill="#eeaa24"/>
<rect x="466" y="103" width="1" height="15" fill="#eeaa24"/>
<rect x="465" y="104" width="3" height="9" fill="#eeaa24"/>
<rect x="471" y="106" width="1" height="11" fill="#eeaa24"/>
<rect x="470" y="110" width="3" height="1" fill="#eeaa24"/>
<rect x="476" y="105" width="1" height="11" fill="#eeaa24"/>
<rect x="475" y="110" width="3" height="5" fill="#eeaa24"/>
<rect x="481" y="111" width="1" height="6" fill="#eeaa24"/>
<rect x="480" y="113" width="3" height="1" fill="#eeaa24"/>
<rect x="486" y="108" width="1" height="9" fill="#eeaa24"/>
<rect x="485" y="114" width="3" height="1" fill="#eeaa24"/>
<rect x="491" y="113" width="1" height="10" fill="#eeaa24"/>
<rect x="490" y="113" width="3" height="9" fill="#eeaa24"/>
<rect x="496" y="119" width="1" height="8" fill="#eeaa24"/>
<rect x="495" y="120" width="3" height="6" fill="#eeaa24"/>
<rect x="501" y="122" width="1" height="12" fill="#eeaa24"/>
<rect x="500" y="123" width="3" height="10" fill="#eeaa24"/>
<rect x="506" y="125" width="1" height="12" fill="#eeaa24"/>
<rect x="505" y="131" width="3" height="5" fill="#eeaa24"/>
<rect x="511" y="128" width="1" height="9" fill="#eeaa24"/>
<rect x="510" y="130" width="3" height="6" fill="#eeaa24"/>
<rect x="511" y="131" width="1" height="4" fill="#fff"/>
<rect x="516" y="123" width="1" height="9" fill="#eeaa24"/>
<rect x="515" y="124" width="3" height="6" fill="#eeaa24"/>
<rect x="516" y="125" width="1" height="4" fill="#fff"/>
<rect x="521" y="121" width="1" height="6" fill="#eeaa24"/>
<rect x="520" y="122" width="3" height="1" fill="#eeaa24"/>
<rect x="526" y="118" width="1" height="7" fill="#eeaa24"/>
<rect x="525" y="122" width="3" height="3" fill="#eeaa24"/>
<rect x="531" y="121" width="1" height="9" fill="#eeaa24"/>
<rect x="530" y="123" width="3" height="3" fill="#eeaa24"/>
<rect x="536" y="119" width="1" height="11" fill="#eeaa24"/>
<rect x="535" y="125" width="3" height="3" fill="#eeaa24"/>
<rect x="541" y="118" width="1" height="10" fill="#eeaa24"/>
<rect x="540" y="126" width="3" height="2" fill="#eeaa24"/>
<rect x="546" y="124" width="1" height="6" fill="#eeaa24"/>
<rect x="545" y="126" width="3" height="3" fill="#eeaa24"/>
<rect x="551" y="123" width="1" height="6" fill="#eeaa24"/>
<rect x="550" y="124" width="3" height="4" fill="#eeaa24"/>
<rect x="551" y="125" width="1" height="2" fill="#fff"/>
<rect x="556" y="121" width="1" height="7" fill="#eeaa24"/>
<rect x="561" y="118" width="1" height="12" fill="#eeaa24"/>
<rect x="560" y="123" width="3" height="6" fill="#eeaa24"/>
<rect x="566" y="125" width="1" height="13" fill="#eeaa24"/>
<rect x="565" y="126" width="3" height="9" fill="#eeaa24"/>
<rect x="571" y="123" width="1" height="15" fill="#eeaa24"/>
<rect x="576" y="127" width="1" height="8" fill="#eeaa24"/>
<rect x="575" y="128" width="3" height="4" fill="#eeaa24"/>
<rect x="576" y="129" width="1" height="2" fill="#fff"/>
<rect x="581" y="127" width="1" height="9" fill="#eeaa24"/>
<rect x="580" y="128" width="3" height="7" fill="#eeaa24"/>
<rect x="586" y="134" width="1" height="2" fill="#eeaa24"/>
<rect x="585" y="134" width="3" height="2" fill="#eeaa24"/>
<rect x="591" y="131" width="1" height="5" fill="#eeaa24"/>
<rect x="590" y="132" width="3" height="3" fill="#eeaa24"/>
<rect x="596" y="131" width="1" height="4" fill="#eeaa24"/>
<rect x="595" y="132" width="3" height="2" fill="#eeaa24"/>
<rect x="601" y="131" width="1" height="6" fill="#eeaa24"/>
<rect x="600" y="133" width="3" height="4" fill="#eeaa24"/>
<rect x="606" y="132" width="1" height="4" fill="#eeaa24"/>
<rect x="605" y="133" width="3" height="1" fill="#eeaa24"/>
<rect x="611" y="134" width="1" height="2" fill="#eeaa24"/>
<rect x="610" y="134" width="3" height="2" fill="#eeaa24"/>
<rect x="616" y="132" width="1" height="8" fill="#eeaa24"/>
<rect x="615" y="133" width="3" height="4" fill="#eeaa24"/>
<rect x="621" y="130" width="1" height="5" fill="#eeaa24"/>
<rect x="626" y="130" width="1" height="11" fill="#eeaa24"/>
<rect x="625" y="131" width="3" height="8" fill="#eeaa24"/>
<rect x="631" y="137" width="1" height="11" fill="#eeaa24"/>
<rect x="630" y="138" width="3" height="5" fill="#eeaa24"/>
<rect x="636" y="141" width="1" height="6" fill="#eeaa24"/>
<rect x="635" y="141" width="3" height="4" fill="#eeaa24"/>
<rect x="642" y="142" width="1" height="5" fill="#eeaa24"/>
<rect x="641" y="143" width="3" height="4" fill="#eeaa24"/>
<rect x="647" y="141" width="1" height="6" fill="#eeaa24"/>
<rect x="646" y="143" width="3" height="3" fill="#eeaa24"/>
<rect x="647" y="144" width="1" height="1" fill="#fff"/>
<rect x="652" y="138" width="1" height="5" fill="#eeaa24"/>
<rect x="657" y="139" width="1" height="7" fill="#eeaa24"/>
<rect x="656" y="140" width="3" height="1" fill="#eeaa24"/>
<rect x="662" y="139" width="1" height="7" fill="#eeaa24"/>
<rect x="661" y="141" width="3" height="4" fill="#eeaa24"/>
<rect x="667" y="141" width="1" height="6" fill="#eeaa24"/>
<rect x="666" y="143" width="3" height="1" fill="#eeaa24"/>
<rect x="672" y="140" width="1" height="3" fill="#eeaa24"/>
<rect x="677" y="126" width="1" height="16" fill="#eeaa24"/>
<rect x="676" y="129" width="3" height="13" fill="#eeaa24"/>
<rect x="677" y="130" width="1" height="11" fill="#fff"/>
<rect x="682" y="114" width="1" height="15" fill="#eeaa24"/>
<rect x="681" y="115" width="3" height="14" fill="#eeaa24"/>
<rect x="682" y="116" width="1" height="12" fill="#fff"/>
<rect x="687" y="111" width="1" height="11" fill="#eeaa24"/>
<rect x="686" y="114" width="3" height="3" fill="#eeaa24"/>
<rect x="692" y="113" width="1" height="9" fill="#eeaa24"/>
<rect x="691" y="114" width="3" height="3" fill="#eeaa24"/>
<rect x="697" y="110" width="1" height="6" fill="#eeaa24"/>
<rect x="696" y="112" width="3" height="1" fill="#eeaa24"/>
<rect x="702" y="110" width="1" height="5" fill="#eeaa24"/>
<rect x="701" y="110" width="3" height="5" fill="#eeaa24"/>
<rect x="702" y="111" width="1" height="3" fill="#fff"/>
<rect x="707" y="111" width="1" height="6" fill="#eeaa24"/>
<rect x="706" y="113" width="3" height="4" fill="#eeaa24"/>
<rect x="712" y="112" width="1" height="10" fill="#eeaa24"/>
<rect x="711" y="116" width="3" height="5" fill="#eeaa24"/>
<rect x="717" y="115" width="1" height="6" fill="#eeaa24"/>
<rect x="716" y="116" width="3" height="4" fill="#eeaa24"/>
<rect x="717" y="117" width="1" height="2" fill="#fff"/>
<line x1="93.6" y1="39.0" x2="750" y2="147" stroke="#921e22" stroke-width="1"/>
<line x1="86.3" y1="100.0" x2="611" y2="203.5" stroke="#921e22" stroke-width="1"/>
<line x1="12" y1="152.55" x2="302" y2="79.55" stroke="#921e22" stroke-width="1"/>
<line x1="12" y1="122.4" x2="48.5" y2="112.5" stroke="#921e22" stroke-width="1"/>
<line x1="12" y1="215" x2="55" y2="212.8" stroke="#2e622e" stroke-width="1"/>
</g>
<polyline points="11.2,257.3 22.3,256.8 33.8,255.0 39.6,256.2 47.7,254.5 55.8,251.5 63.8,248.1 74.2,246.5 85.8,240.0 97.3,233.8 107.7,232.4 120.4,234.7 127.3,237.7 134.2,244.6 143.5,253.8 152.7,260.8 166.5,270.0 175.8,276.9 180.0,279.9 186.9,283.8 196.2,287.3 205.4,291.9 214.6,296.5 223.8,297.2 235.4,297.0 244.6,294.2 253.8,293.1 263.1,288.5 272.3,283.8 281.5,279.9 290.8,278.5 300.0,278.5 309.2,276.2 316.2,276.2 325.4,280.4 334.6,284.5 341.5,287.8 350.8,290.8 360.0,292.6 365.4,292.4 375.8,293.8 385.0,297.0 394.2,300.7 401.2,303.5 410.4,304.6 419.6,305.8 428.8,306.9 438.1,306.2 447.3,306.2 456.5,305.3 465.8,305.8 475.0,307.6 484.2,309.2 491.2,310.4 500.4,308.5 509.6,306.2 516.5,304.6 523.5,305.8 530.0,306.9 539.2,307.6 548.5,309.2 560.0,311.5 569.2,310.9 576.2,311.5 585.4,310.4 594.6,311.5 606.2,311.5 615.4,310.4 624.6,308.1 631.5,303.5 640.8,299.3 650.0,296.1 659.2,294.2 668.5,291.6 682.0,289.0 690.0,286.3 702.0,282.3 714.0,282.1 716.7,283.4" fill="none" stroke="#7a7a7a" stroke-width="1" stroke-linejoin="round" shape-rendering="crispEdges"/>
<polyline points="11.2,285.5 17.7,283.2 24.6,279.2 31.5,279.7 37.8,282.2 43.1,274.6 48.8,266.5 54.6,264.7 59.2,265.4 64.5,270.0 69.2,272.3 74.2,269.3 78.8,263.1 83.5,252.2 88.1,259.6 93.4,266.5 98.5,260.1 103.1,266.1 108.8,272.3 115.8,277.6 123.8,279.2 129.6,282.7 134.2,288.5 140.0,293.1 149.2,290.3 155.0,291.5 161.9,293.8 171.2,295.4 180.0,296.5 185.8,298.4 193.8,299.3 199.6,294.2 205.4,296.5 211.2,298.4 216.9,298.4 223.8,301.2 229.6,303.0 234.2,303.0 240.0,305.3 244.6,306.2 250.4,303.5 256.2,305.3 261.9,307.6 267.7,309.2 273.5,310.9 279.2,311.5 283.8,310.4 288.5,307.6 294.2,305.3 300.0,306.9 305.8,309.2 311.5,309.2 316.2,306.9 321.9,301.2 327.7,300.0 332.3,301.2 335.8,299.3 341.5,300.7 346.2,300.0 350.3,294.2 354.2,298.8 355.0,299.3 359.6,303.5 365.4,305.3 371.2,302.3 374.6,294.2 380.4,291.5 386.2,294.2 391.9,297.0 400.0,297.7 405.3,300.0 410.4,295.4 414.5,293.1 420.8,294.7 428.8,296.5 435.8,296.1 440.4,294.7 445.0,297.0 450.8,293.8 455.4,290.8 461.2,291.5 465.8,293.8 472.7,296.1 479.6,296.5 486.5,296.1 493.5,298.4 502.7,302.3 510.8,305.3 516.5,300.7 522.3,300.0 528.1,296.1 530.0,298.4 539.2,298.8 546.2,300.7 553.1,299.3 560.0,297.0 564.6,300.0 571.5,301.2 580.8,304.6 587.7,304.6 594.6,302.3 601.5,303.5 609.6,303.5 616.5,306.2 621.2,304.6 626.9,308.1 633.8,310.4 643.1,311.5 647.7,309.9 652.3,307.6 656.9,309.2 662.7,310.9 668.5,310.4 670.0,309.0 672.7,307.7 674.7,301.0 677.3,289.0 682.7,277.3 686.7,278.3 692.7,282.3 697.3,280.3 702.0,281.7 706.0,283.7 710.0,286.1 716.7,289.7" fill="none" stroke="#8e181e" stroke-width="1" stroke-linejoin="round" shape-rendering="crispEdges"/>
<polyline points="11.2,306.9 17.7,309.2 26.9,311.5 32.7,311.5 39.6,308.1 46.5,309.9 53.5,312.7 62.7,315.0 68.5,312.2 74.2,313.8 83.5,316.9 93.8,319.6 98.5,320.1 103.1,313.8 107.7,313.8 114.6,311.5 123.8,312.2 128.5,301.2 134.2,287.8 140.0,291.9 148.1,296.1 155.0,299.3 159.6,297.7 165.4,297.7 170.0,295.4 178.1,298.8 180.0,299.3 184.6,297.0 189.2,293.1 193.8,293.5 199.6,296.5 204.2,298.4 208.8,299.3 214.6,298.4 218.1,297.0 224.3,289.2 229.6,291.9 234.7,294.7 240.0,285.0 244.6,286.2 249.2,288.5 255.0,287.3 259.6,280.4 264.2,275.3 268.8,276.9 273.5,279.2 279.2,280.4 285.0,283.8 290.8,286.8 295.4,289.6 300.0,280.4 305.8,285.0 311.5,287.3 318.5,290.8 325.4,293.3 332.3,294.9 339.2,297.0 346.2,298.4 350.3,300.7 354.2,296.5 355.0,293.8 360.8,291.5 366.5,292.4 373.5,294.2 380.4,298.4 385.0,295.4 391.9,297.0 401.2,298.4 405.8,290.8 411.5,295.4 418.5,300.7 426.5,301.2 434.6,302.3 440.4,304.6 445.0,303.0 454.2,305.3 460.0,303.5 464.6,298.4 466.9,294.2 472.7,298.4 479.6,299.3 486.5,299.3 493.5,293.1 502.7,287.3 508.5,287.8 516.5,290.8 525.8,294.2 530.0,291.5 534.6,293.8 540.4,296.1 546.2,296.5 553.1,297.7 561.2,301.2 566.5,292.4 570.4,295.4 576.2,298.4 585.4,297.0 594.6,299.3 601.5,298.4 607.3,299.3 613.1,297.7 617.7,296.1 621.2,298.4 625.8,293.1 631.5,285.5 636.2,286.8 640.8,287.8 646.5,290.8 652.3,292.4 656.9,290.8 662.7,292.4 668.5,293.1 670.0,294.1 672.7,294.6 675.3,297.0 679.3,301.0 683.3,303.7 690.0,306.6 696.7,308.3 702.0,309.4 706.0,307.4 710.0,305.0 714.0,303.4 716.7,304.6" fill="none" stroke="#160e78" stroke-width="1" stroke-linejoin="round" shape-rendering="crispEdges"/>
<g shape-rendering="crispEdges">
<rect x="13" y="392" width="1" height="3" fill="#b82828"/>
<rect x="18" y="392" width="1" height="2" fill="#b82828"/>
<rect x="23" y="392" width="1" height="1" fill="#b82828"/>
<rect x="28" y="392" width="1" height="1" fill="#b82828"/>
<rect x="34" y="392" width="1" height="1" fill="#b82828"/>
<rect x="39" y="392" width="1" height="1" fill="#b82828"/>
<rect x="44" y="391" width="1" height="2" fill="#b82828"/>
<rect x="48" y="390" width="1" height="3" fill="#b82828"/>
<rect x="54" y="387" width="1" height="6" fill="#b82828"/>
<rect x="58" y="386" width="1" height="7" fill="#b82828"/>
<rect x="64" y="385" width="1" height="8" fill="#b82828"/>
<rect x="69" y="386" width="1" height="7" fill="#b82828"/>
<rect x="74" y="386" width="1" height="7" fill="#b82828"/>
<rect x="78" y="385" width="1" height="8" fill="#b82828"/>
<rect x="84" y="381" width="1" height="12" fill="#b82828"/>
<rect x="88" y="381" width="1" height="12" fill="#b82828"/>
<rect x="94" y="381" width="1" height="12" fill="#b82828"/>
<rect x="99" y="381" width="1" height="12" fill="#b82828"/>
<rect x="104" y="384" width="1" height="9" fill="#b82828"/>
<rect x="108" y="386" width="1" height="7" fill="#b82828"/>
<rect x="114" y="390" width="1" height="3" fill="#b82828"/>
<rect x="119" y="392" width="1" height="1" fill="#b82828"/>
<rect x="124" y="392" width="1" height="1" fill="#b82828"/>
<rect x="129" y="392" width="1" height="5" fill="#b82828"/>
<rect x="134" y="392" width="1" height="11" fill="#b82828"/>
<rect x="139" y="392" width="1" height="13" fill="#b82828"/>
<rect x="144" y="392" width="1" height="13" fill="#b82828"/>
<rect x="149" y="392" width="1" height="13" fill="#b82828"/>
<rect x="154" y="392" width="1" height="11" fill="#b82828"/>
<rect x="159" y="392" width="1" height="8" fill="#b82828"/>
<rect x="164" y="392" width="1" height="7" fill="#b82828"/>
<rect x="169" y="392" width="1" height="7" fill="#b82828"/>
<rect x="174" y="392" width="1" height="5" fill="#b82828"/>
<rect x="179" y="392" width="1" height="4" fill="#b82828"/>
<rect x="184" y="392" width="1" height="4" fill="#b82828"/>
<rect x="189" y="392" width="1" height="4" fill="#b82828"/>
<rect x="194" y="392" width="1" height="5" fill="#b82828"/>
<rect x="199" y="392" width="1" height="3" fill="#b82828"/>
<rect x="204" y="392" width="1" height="3" fill="#b82828"/>
<rect x="209" y="392" width="1" height="3" fill="#b82828"/>
<rect x="214" y="392" width="1" height="3" fill="#b82828"/>
<rect x="219" y="392" width="1" height="5" fill="#b82828"/>
<rect x="224" y="392" width="1" height="7" fill="#b82828"/>
<rect x="229" y="392" width="1" height="8" fill="#b82828"/>
<rect x="234" y="392" width="1" height="9" fill="#b82828"/>
<rect x="239" y="392" width="1" height="11" fill="#b82828"/>
<rect x="244" y="392" width="1" height="12" fill="#b82828"/>
<rect x="249" y="392" width="1" height="12" fill="#b82828"/>
<rect x="254" y="392" width="1" height="13" fill="#b82828"/>
<rect x="259" y="392" width="1" height="13" fill="#b82828"/>
<rect x="264" y="392" width="1" height="14" fill="#b82828"/>
<rect x="269" y="392" width="1" height="14" fill="#b82828"/>
<rect x="274" y="392" width="1" height="13" fill="#b82828"/>
<rect x="279" y="392" width="1" height="12" fill="#b82828"/>
<rect x="284" y="392" width="1" height="10" fill="#b82828"/>
<rect x="289" y="392" width="1" height="7" fill="#b82828"/>
<rect x="294" y="392" width="1" height="7" fill="#b82828"/>
<rect x="300" y="392" width="1" height="6" fill="#b82828"/>
<rect x="305" y="392" width="1" height="6" fill="#b82828"/>
<rect x="310" y="392" width="1" height="4" fill="#b82828"/>
<rect x="315" y="392" width="1" height="3" fill="#b82828"/>
<rect x="320" y="392" width="1" height="1" fill="#b82828"/>
<rect x="325" y="391" width="1" height="2" fill="#b82828"/>
<rect x="330" y="389" width="1" height="4" fill="#b82828"/>
<rect x="335" y="388" width="1" height="5" fill="#b82828"/>
<rect x="340" y="386" width="1" height="7" fill="#b82828"/>
<rect x="345" y="386" width="1" height="7" fill="#b82828"/>
<rect x="350" y="385" width="1" height="8" fill="#b82828"/>
<rect x="355" y="386" width="1" height="7" fill="#b82828"/>
<rect x="360" y="388" width="1" height="5" fill="#b82828"/>
<rect x="365" y="392" width="1" height="1" fill="#b82828"/>
<rect x="370" y="391" width="1" height="2" fill="#b82828"/>
<rect x="375" y="390" width="1" height="3" fill="#b82828"/>
<rect x="380" y="388" width="1" height="5" fill="#b82828"/>
<rect x="385" y="386" width="1" height="7" fill="#b82828"/>
<rect x="390" y="387" width="1" height="6" fill="#b82828"/>
<rect x="395" y="388" width="1" height="5" fill="#b82828"/>
<rect x="400" y="389" width="1" height="4" fill="#b82828"/>
<rect x="405" y="391" width="1" height="2" fill="#b82828"/>
<rect x="410" y="390" width="1" height="3" fill="#b82828"/>
<rect x="415" y="391" width="1" height="2" fill="#b82828"/>
<rect x="420" y="392" width="1" height="1" fill="#b82828"/>
<rect x="425" y="392" width="1" height="1" fill="#b82828"/>
<rect x="430" y="392" width="1" height="1" fill="#b82828"/>
<rect x="435" y="392" width="1" height="1" fill="#b82828"/>
<rect x="440" y="392" width="1" height="1" fill="#b82828"/>
<rect x="445" y="392" width="1" height="1" fill="#b82828"/>
<rect x="450" y="392" width="1" height="1" fill="#b82828"/>
<rect x="455" y="391" width="1" height="2" fill="#b82828"/>
<rect x="460" y="391" width="1" height="2" fill="#b82828"/>
<rect x="465" y="392" width="1" height="1" fill="#b82828"/>
<rect x="470" y="392" width="1" height="2" fill="#b82828"/>
<rect x="475" y="392" width="1" height="3" fill="#b82828"/>
<rect x="480" y="392" width="1" height="3" fill="#b82828"/>
<rect x="485" y="392" width="1" height="3" fill="#b82828"/>
<rect x="490" y="392" width="1" height="3" fill="#b82828"/>
<rect x="495" y="392" width="1" height="5" fill="#b82828"/>
<rect x="500" y="392" width="1" height="6" fill="#b82828"/>
<rect x="505" y="392" width="1" height="7" fill="#b82828"/>
<rect x="510" y="392" width="1" height="9" fill="#b82828"/>
<rect x="515" y="392" width="1" height="6" fill="#b82828"/>
<rect x="520" y="392" width="1" height="4" fill="#b82828"/>
<rect x="525" y="392" width="1" height="3" fill="#b82828"/>
<rect x="530" y="392" width="1" height="1" fill="#b82828"/>
<rect x="677" y="390" width="1" height="3" fill="#b82828"/>
<rect x="682" y="387" width="1" height="6" fill="#b82828"/>
<rect x="687" y="385" width="1" height="8" fill="#b82828"/>
<rect x="692" y="384" width="1" height="9" fill="#b82828"/>
<rect x="697" y="384" width="1" height="9" fill="#b82828"/>
<rect x="702" y="383" width="1" height="10" fill="#b82828"/>
<rect x="707" y="385" width="1" height="8" fill="#b82828"/>
<rect x="712" y="387" width="1" height="6" fill="#b82828"/>
<rect x="717" y="385" width="1" height="8" fill="#b82828"/>
<rect x="531" y="392" width="1" height="1" fill="#b82828"/>
<rect x="536" y="392" width="1" height="1" fill="#b82828"/>
<rect x="541" y="392" width="1" height="1" fill="#b82828"/>
<rect x="551" y="392" width="1" height="1" fill="#b82828"/>
<rect x="556" y="392" width="1" height="1" fill="#b82828"/>
<rect x="561" y="392" width="1" height="1" fill="#b82828"/>
<rect x="586" y="392" width="1" height="1" fill="#b82828"/>
<rect x="621" y="392" width="1" height="1" fill="#b82828"/>
<rect x="626" y="392" width="1" height="1" fill="#b82828"/>
<rect x="636" y="392" width="1" height="1" fill="#b82828"/>
<rect x="642" y="392" width="1" height="1" fill="#b82828"/>
<rect x="647" y="392" width="1" height="1" fill="#b82828"/>
<rect x="652" y="392" width="1" height="1" fill="#b82828"/>
<rect x="672" y="392" width="1" height="1" fill="#b82828"/>
</g>
<polyline points="11.2,373.5 18.8,372.3 28.1,369.3 37.3,368.8 46.5,366.1 53.5,360.8 62.7,356.2 69.6,355.5 76.5,351.5 83.5,343.5 91.5,338.8 98.5,334.2 104.2,336.1 110.0,336.5 115.8,339.3 122.7,341.6 129.6,348.1 136.5,359.6 143.5,364.7 149.2,367.7 155.0,367.0 161.9,367.7 168.8,370.0 178.1,368.4 180.0,368.4 186.9,371.2 193.8,373.5 200.8,372.3 207.7,373.9 216.9,376.9 223.8,381.5 230.8,385.5 237.7,390.8 244.6,396.5 251.5,400.0 258.5,404.6 265.4,410.4 272.3,414.5 279.2,417.3 283.8,418.5 289.6,416.2 295.4,417.3 301.2,420.1 306.9,419.6 313.8,417.3 320.8,413.8 327.7,409.2 334.6,405.3 341.5,401.2 348.5,397.7 354.2,395.4 355.0,395.4 359.6,397.7 365.4,400.0 371.2,398.8 376.9,396.1 382.7,393.1 389.6,392.4 396.5,392.4 403.5,393.1 410.4,391.9 417.3,393.1 424.2,393.1 431.2,393.1 438.1,393.1 445.0,394.2 451.9,392.4 458.8,390.8 465.8,391.9 472.7,393.8 479.6,395.4 486.5,395.4 493.5,397.7 500.4,401.2 507.3,404.6 516.5,405.3 523.5,403.9 530.0,403.5 543.8,403.5 550.8,403.0 556.5,401.2 564.6,402.3 576.2,401.9 585.4,403.5 592.3,402.3 599.2,403.5 606.2,402.3 617.7,401.9 626.9,401.2 633.8,402.3 640.8,404.6 650.0,404.3 654.0,403.7 667.3,403.7 672.7,402.3 676.7,399.9 680.7,396.3 684.7,392.7 688.7,390.3 692.7,388.3 696.7,385.7 700.7,383.7 704.7,382.3 716.7,382.3" fill="none" stroke="#12125c" stroke-width="1" stroke-linejoin="round" shape-rendering="crispEdges"/>
<circle cx="13.3" cy="369.7" r="1.5" fill="#dc2020"/>
<circle cx="18.4" cy="370.7" r="1.5" fill="#dc2020"/>
<circle cx="23.7" cy="370.2" r="1.5" fill="#dc2020"/>
<circle cx="28.7" cy="369.5" r="1.5" fill="#dc2020"/>
<circle cx="34.0" cy="369.5" r="1.5" fill="#dc2020"/>
<circle cx="39.1" cy="369.0" r="1.5" fill="#dc2020"/>
<circle cx="44.0" cy="368.6" r="1.5" fill="#dc2020"/>
<circle cx="49.0" cy="367.4" r="1.5" fill="#dc2020"/>
<circle cx="54.1" cy="366.3" r="1.5" fill="#dc2020"/>
<circle cx="59.0" cy="364.4" r="1.5" fill="#dc2020"/>
<circle cx="64.0" cy="362.6" r="1.5" fill="#dc2020"/>
<circle cx="69.1" cy="361.4" r="1.5" fill="#dc2020"/>
<circle cx="74.0" cy="359.4" r="1.5" fill="#dc2020"/>
<circle cx="79.0" cy="357.5" r="1.5" fill="#dc2020"/>
<circle cx="84.1" cy="354.7" r="1.5" fill="#dc2020"/>
<circle cx="89.0" cy="351.7" r="1.5" fill="#dc2020"/>
<circle cx="94.0" cy="348.3" r="1.5" fill="#dc2020"/>
<circle cx="99.1" cy="346.0" r="1.5" fill="#dc2020"/>
<circle cx="104.0" cy="343.7" r="1.5" fill="#dc2020"/>
<circle cx="109.0" cy="341.8" r="1.5" fill="#dc2020"/>
<circle cx="114.1" cy="340.9" r="1.5" fill="#dc2020"/>
<circle cx="119.4" cy="340.9" r="1.5" fill="#dc2020"/>
<circle cx="124.5" cy="341.8" r="1.5" fill="#dc2020"/>
<circle cx="129.4" cy="342.5" r="1.5" fill="#dc2020"/>
<circle cx="134.9" cy="345.5" r="1.5" fill="#dc2020"/>
<circle cx="139.7" cy="348.3" r="1.5" fill="#dc2020"/>
<circle cx="144.8" cy="351.0" r="1.5" fill="#dc2020"/>
<circle cx="149.9" cy="354.5" r="1.5" fill="#dc2020"/>
<circle cx="154.7" cy="357.5" r="1.5" fill="#dc2020"/>
<circle cx="159.8" cy="359.4" r="1.5" fill="#dc2020"/>
<circle cx="164.9" cy="361.2" r="1.5" fill="#dc2020"/>
<circle cx="169.7" cy="362.1" r="1.5" fill="#dc2020"/>
<circle cx="174.8" cy="363.3" r="1.5" fill="#dc2020"/>
<circle cx="179.9" cy="364.4" r="1.5" fill="#dc2020"/>
<circle cx="184.8" cy="366.3" r="1.5" fill="#dc2020"/>
<circle cx="189.9" cy="366.7" r="1.5" fill="#dc2020"/>
<circle cx="194.7" cy="367.9" r="1.5" fill="#dc2020"/>
<circle cx="199.8" cy="368.6" r="1.5" fill="#dc2020"/>
<circle cx="204.9" cy="369.5" r="1.5" fill="#dc2020"/>
<circle cx="209.7" cy="370.2" r="1.5" fill="#dc2020"/>
<circle cx="214.8" cy="370.9" r="1.5" fill="#dc2020"/>
<circle cx="219.9" cy="372.5" r="1.5" fill="#dc2020"/>
<circle cx="224.7" cy="374.4" r="1.5" fill="#dc2020"/>
<circle cx="229.8" cy="376.7" r="1.5" fill="#dc2020"/>
<circle cx="234.9" cy="378.7" r="1.5" fill="#dc2020"/>
<circle cx="239.7" cy="381.3" r="1.5" fill="#dc2020"/>
<circle cx="244.8" cy="384.5" r="1.5" fill="#dc2020"/>
<circle cx="249.9" cy="386.8" r="1.5" fill="#dc2020"/>
<circle cx="254.7" cy="389.4" r="1.5" fill="#dc2020"/>
<circle cx="259.8" cy="392.6" r="1.5" fill="#dc2020"/>
<circle cx="264.9" cy="395.6" r="1.5" fill="#dc2020"/>
<circle cx="269.7" cy="399.5" r="1.5" fill="#dc2020"/>
<circle cx="274.8" cy="402.5" r="1.5" fill="#dc2020"/>
<circle cx="279.9" cy="405.5" r="1.5" fill="#dc2020"/>
<circle cx="284.7" cy="407.6" r="1.5" fill="#dc2020"/>
<circle cx="289.8" cy="409.4" r="1.5" fill="#dc2020"/>
<circle cx="294.9" cy="410.6" r="1.5" fill="#dc2020"/>
<circle cx="300.2" cy="412.4" r="1.5" fill="#dc2020"/>
<circle cx="305.5" cy="413.6" r="1.5" fill="#dc2020"/>
<circle cx="310.6" cy="414.5" r="1.5" fill="#dc2020"/>
<circle cx="315.7" cy="414.0" r="1.5" fill="#dc2020"/>
<circle cx="320.5" cy="413.4" r="1.5" fill="#dc2020"/>
<circle cx="325.6" cy="412.4" r="1.5" fill="#dc2020"/>
<circle cx="330.7" cy="411.3" r="1.5" fill="#dc2020"/>
<circle cx="335.5" cy="410.1" r="1.5" fill="#dc2020"/>
<circle cx="340.6" cy="408.3" r="1.5" fill="#dc2020"/>
<circle cx="345.7" cy="406.4" r="1.5" fill="#dc2020"/>
<circle cx="350.5" cy="404.8" r="1.5" fill="#dc2020"/>
<circle cx="355.2" cy="403.0" r="1.5" fill="#dc2020"/>
<circle cx="360.3" cy="401.4" r="1.5" fill="#dc2020"/>
<circle cx="365.1" cy="400.2" r="1.5" fill="#dc2020"/>
<circle cx="370.2" cy="399.5" r="1.5" fill="#dc2020"/>
<circle cx="375.3" cy="399.0" r="1.5" fill="#dc2020"/>
<circle cx="380.1" cy="398.6" r="1.5" fill="#dc2020"/>
<circle cx="385.2" cy="397.2" r="1.5" fill="#dc2020"/>
<circle cx="390.3" cy="395.6" r="1.5" fill="#dc2020"/>
<circle cx="395.1" cy="394.4" r="1.5" fill="#dc2020"/>
<circle cx="400.2" cy="394.0" r="1.5" fill="#dc2020"/>
<circle cx="405.3" cy="393.7" r="1.5" fill="#dc2020"/>
<circle cx="410.1" cy="392.8" r="1.5" fill="#dc2020"/>
<circle cx="415.2" cy="392.8" r="1.5" fill="#dc2020"/>
<circle cx="420.3" cy="392.8" r="1.5" fill="#dc2020"/>
<circle cx="425.1" cy="392.8" r="1.5" fill="#dc2020"/>
<circle cx="430.2" cy="392.8" r="1.5" fill="#dc2020"/>
<circle cx="435.3" cy="392.8" r="1.5" fill="#dc2020"/>
<circle cx="440.1" cy="392.8" r="1.5" fill="#dc2020"/>
<circle cx="445.2" cy="393.3" r="1.5" fill="#dc2020"/>
<circle cx="450.3" cy="392.8" r="1.5" fill="#dc2020"/>
<circle cx="455.1" cy="392.6" r="1.5" fill="#dc2020"/>
<circle cx="460.2" cy="391.7" r="1.5" fill="#dc2020"/>
<circle cx="465.3" cy="391.7" r="1.5" fill="#dc2020"/>
<circle cx="470.1" cy="392.1" r="1.5" fill="#dc2020"/>
<circle cx="475.2" cy="392.6" r="1.5" fill="#dc2020"/>
<circle cx="480.3" cy="392.8" r="1.5" fill="#dc2020"/>
<circle cx="485.1" cy="393.3" r="1.5" fill="#dc2020"/>
<circle cx="490.2" cy="393.7" r="1.5" fill="#dc2020"/>
<circle cx="495.3" cy="394.4" r="1.5" fill="#dc2020"/>
<circle cx="500.1" cy="394.9" r="1.5" fill="#dc2020"/>
<circle cx="505.2" cy="397.2" r="1.5" fill="#dc2020"/>
<circle cx="510.3" cy="399.0" r="1.5" fill="#dc2020"/>
<circle cx="515.1" cy="400.2" r="1.5" fill="#dc2020"/>
<circle cx="520.2" cy="400.7" r="1.5" fill="#dc2020"/>
<circle cx="525.3" cy="401.4" r="1.5" fill="#dc2020"/>
<circle cx="530.1" cy="401.8" r="1.5" fill="#dc2020"/>
<circle cx="535.2" cy="402.1" r="1.5" fill="#dc2020"/>
<circle cx="540.3" cy="402.1" r="1.5" fill="#dc2020"/>
<circle cx="545.4" cy="402.1" r="1.5" fill="#dc2020"/>
<circle cx="550.5" cy="402.1" r="1.5" fill="#dc2020"/>
<circle cx="555.6" cy="402.1" r="1.5" fill="#dc2020"/>
<circle cx="560.7" cy="402.1" r="1.5" fill="#dc2020"/>
<circle cx="565.8" cy="402.1" r="1.5" fill="#dc2020"/>
<circle cx="570.9" cy="402.1" r="1.5" fill="#dc2020"/>
<circle cx="576.0" cy="402.1" r="1.5" fill="#dc2020"/>
<circle cx="581.1" cy="402.1" r="1.5" fill="#dc2020"/>
<circle cx="586.2" cy="402.1" r="1.5" fill="#dc2020"/>
<circle cx="591.4" cy="402.1" r="1.5" fill="#dc2020"/>
<circle cx="596.5" cy="402.1" r="1.5" fill="#dc2020"/>
<circle cx="601.6" cy="402.1" r="1.5" fill="#dc2020"/>
<circle cx="606.7" cy="402.1" r="1.5" fill="#dc2020"/>
<circle cx="611.8" cy="402.1" r="1.5" fill="#dc2020"/>
<circle cx="616.9" cy="402.1" r="1.5" fill="#dc2020"/>
<circle cx="622.0" cy="402.1" r="1.5" fill="#dc2020"/>
<circle cx="627.1" cy="402.1" r="1.5" fill="#dc2020"/>
<circle cx="632.2" cy="402.1" r="1.5" fill="#dc2020"/>
<circle cx="637.3" cy="402.1" r="1.5" fill="#dc2020"/>
<circle cx="642.4" cy="402.1" r="1.5" fill="#dc2020"/>
<circle cx="647.5" cy="402.1" r="1.5" fill="#dc2020"/>
<circle cx="652.6" cy="402.5" r="1.5" fill="#dc2020"/>
<circle cx="657.5" cy="402.5" r="1.5" fill="#dc2020"/>
<circle cx="662.6" cy="402.5" r="1.5" fill="#dc2020"/>
<circle cx="667.5" cy="402.5" r="1.5" fill="#dc2020"/>
<circle cx="672.6" cy="402.3" r="1.5" fill="#dc2020"/>
<circle cx="677.5" cy="401.5" r="1.5" fill="#dc2020"/>
<circle cx="682.6" cy="400.5" r="1.5" fill="#dc2020"/>
<circle cx="687.5" cy="398.5" r="1.5" fill="#dc2020"/>
<circle cx="692.6" cy="396.5" r="1.5" fill="#dc2020"/>
<circle cx="697.5" cy="393.5" r="1.5" fill="#dc2020"/>
<circle cx="702.6" cy="391.6" r="1.5" fill="#dc2020"/>
<circle cx="707.5" cy="389.5" r="1.5" fill="#dc2020"/>
<circle cx="712.6" cy="388.5" r="1.5" fill="#dc2020"/>
<circle cx="717.5" cy="386.5" r="1.5" fill="#dc2020"/>
</svg>
<div style="position:absolute;left:11px;top:30px;width:31px;height:22px;background:#585858;">
 <div style="position:absolute;left:0;top:0;width:29px;height:20px;background:#fff"></div>
 <div style="position:absolute;left:1px;top:1px;width:28px;height:19px;background:#f0f0f0"></div>
 <div style="position:absolute;left:1px;top:1px;width:28px;height:4px;background:#c8c8c8"></div>
 <div style="position:absolute;left:4px;top:8px;width:10px;height:10px;border-radius:2px;background:linear-gradient(#e8404c,#c02030);border:1px solid #b02030;box-sizing:border-box"></div>
 <div style="position:absolute;left:17px;top:8px;width:10px;height:10px;border-radius:2px;background:linear-gradient(#30a0e0,#1878c0);border:1px solid #1870b0;box-sizing:border-box"></div>
</div>
<div style="position:absolute;left:844px;top:106px;width:48px;height:21px;background:#323232;"></div>
<div class="pl" style="left:852.5px;top:110px;color:#fff;">1.4100</div>
<div class="lb" style="left:852px;top:47px;">1.4600</div><div class="lb" style="left:852px;top:73px;">1.4400</div><div class="lb" style="left:852px;top:99px;">1.4200</div><div class="lb" style="left:852px;top:126px;">1.4000</div><div class="lb" style="left:852px;top:152px;">1.3800</div><div class="lb" style="left:852px;top:179px;">1.3600</div><div class="lb" style="left:852px;top:205px;">1.3400</div><div class="lb" style="left:852px;top:230px;">60</div><div class="lb" style="left:852px;top:261px;">40</div><div class="lb" style="left:852px;top:292px;">20</div><div class="lb" style="left:853px;top:329px;">+0.02</div><div class="lb" style="left:853px;top:359px;">+0.01</div><div class="lb" style="left:853px;top:389px;">-0.00</div><div class="lb dx" style="left:17.4px;top:437px">17</div><div class="lb dx" style="left:47.4px;top:437px">18</div><div class="lb dx" style="left:77.4px;top:437px">19</div><div class="lb dx" style="left:108.4px;top:437px">20</div><div class="lb dx" style="left:138.4px;top:437px">23</div><div class="lb dx" style="left:168.4px;top:437px">24</div><div class="lb dx" style="left:198.4px;top:437px">25</div><div class="lb dx" style="left:228.4px;top:437px">26</div><div class="lb dx" style="left:258.4px;top:437px">27</div><div class="lb dx" style="left:289.4px;top:437px">30</div><div class="lb dx" style="left:319.4px;top:437px">31</div><div class="lb dx" style="left:349.4px;top:437px">1</div><div class="lb dx" style="left:379.4px;top:437px">2</div><div class="lb dx" style="left:409.4px;top:437px">3</div><div class="lb dx" style="left:439.4px;top:437px">6</div><div class="lb dx" style="left:470.4px;top:437px">7</div><div class="lb dx" style="left:500.4px;top:437px">8</div><div class="lb dx" style="left:530.4px;top:437px">9</div><div class="lb dx" style="left:560.4px;top:437px">10</div><div class="lb dx" style="left:591.4px;top:437px">13</div><div class="lb dx" style="left:621.4px;top:437px">14</div><div class="lb dx" style="left:651.4px;top:437px">15</div><div class="lb dx" style="left:681.4px;top:437px">16</div><div class="lb dx" style="left:711.4px;top:437px">17</div><div class="lb dx" style="left:741.4px;top:437px">18</div><div class="lb dx" style="left:771.4px;top:437px">19</div><div class="lb dx" style="left:802.4px;top:437px">20</div>
<div class="lb tg" style="left:12px;top:230px;color:#8c8c8c;width:21px;"><span style="letter-spacing:-0.45px;margin-left:-0.6px">DMI</span></div>
<div class="lb tg" style="left:12px;top:332px;color:#1c1c78;width:32px;"><span style="letter-spacing:-1.1px">MACD</span></div>
<div class="mk" style="left:11px;top:401px;height:26px"></div>
<div class="mon" style="left:12px;top:401px;width:63px;">Мар 2020</div>
<div class="mk" style="left:365px;top:401px;height:26px"></div>
<div class="mon" style="left:366px;top:401px;width:62px;">Апр 2020</div>
</div>
</body></html>
